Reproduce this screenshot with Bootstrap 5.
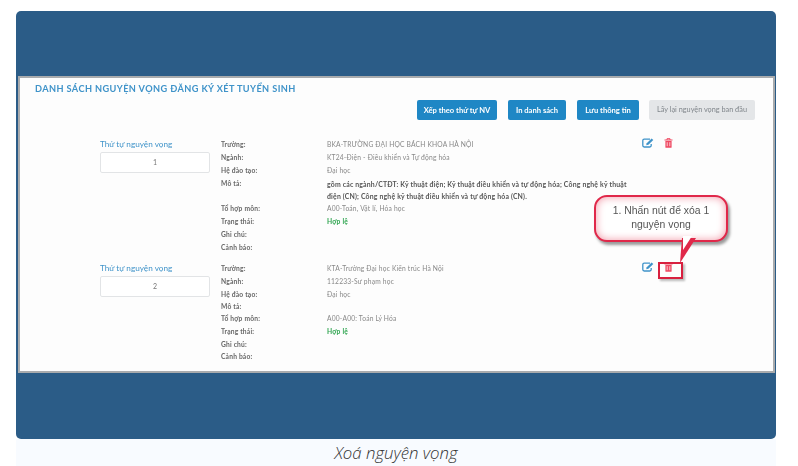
<!DOCTYPE html>
<html lang="vi"><head><meta charset="utf-8"><title>Xoá nguyện vọng</title>
<link rel="stylesheet" href="https://cdn.jsdelivr.net/npm/bootstrap@5.3.0/dist/css/bootstrap.min.css">
<style>
html,body{height:466px;overflow:hidden;background:#fff}
.page-wrap{padding:11px 22px 0 16px;height:466px}
.shot{background:#2b5c87;border-radius:5px;padding:65px 1px 66px 2px;height:428px}
.panel{position:relative;height:297px;background:#fdfdfd;border:2px solid #a9abad;padding:4px 17px 0 15px;font-family:"Lato","Liberation Sans",sans-serif}
.soft{filter:blur(.55px)}
.ttl{font-family:"Lato","Liberation Sans",sans-serif;font-weight:700;font-size:9.2px;line-height:13px;color:#3f93c9;letter-spacing:.4px;margin:0}
.tools{gap:11px;margin:5px 0 0;padding-right:1px}
.act{height:20px;padding:0;border:0;border-radius:2px;font-size:7.6px;line-height:20px;font-weight:700;color:#fff;background:#1f87c5}
.act-a{width:80px}.act-b{width:58px}.act-c{width:62px;margin-right:-1px}
.act-off{width:106px;background:#e4e6e8;color:#80868b;font-weight:400;font-size:7.3px}
.rec{display:flex;padding-left:65px;margin-top:18px}
.rec+.rec{margin-top:8px}
.pick{width:121px;flex:none}
.pick-l{font-size:8.2px;line-height:13px;color:#3f93c9}
.pick-i{width:110px;height:21px;border:1px solid #e2e4e6;background:#fff;border-radius:2px;font-size:7px;line-height:19px;text-align:center;color:#777;margin-top:1px}
.info{width:417px;flex:none}
.ln{display:flex;font-size:6.7px;letter-spacing:.18px;line-height:13px;color:#888;min-height:13px}
.ln>span:first-child{width:106px;flex:none;color:#666;font-weight:700}
.ln-t{min-height:11px;line-height:11px}
.ln-v{width:308px;line-height:12px;padding-top:1px}
.strong{font-weight:700;color:#555;font-size:6.9px}
.ok{color:#2da44e;font-weight:700}
.ico{display:flex;gap:10px;padding-left:4px;height:13px;align-items:flex-start}
.hl{position:absolute;left:638px;top:184px;width:25px;height:17px;border:2px solid #d8203f;box-shadow:2px 2px 2px #bbb}
.call{position:absolute;left:574px;top:117px;width:134px;height:47px;background:#fff;border:2px solid #e0284a;border-radius:13px;box-shadow:inset 0 0 9px #f29aa8,2px 3px 3px #9a9a9a;font-family:"Liberation Sans",sans-serif;font-size:10.4px;line-height:14px;text-align:center;color:#555;padding:7px 10px 0}
.pin{position:absolute;left:660px;top:160px;width:16px;height:25px;background:#e0284a;clip-path:polygon(2px 0,16px 0,0 25px);z-index:3}
.pin-in{position:absolute;left:663px;top:158px;width:9px;height:14px;background:#fff;clip-path:polygon(0 0,9px 0,0 14px);z-index:4}
.cap{background:#f8fbff;height:27px;font-family:"Open Sans",sans-serif;font-style:italic;font-weight:300;font-size:16.8px;line-height:27px;text-align:center;color:#333}
.shot-wrap{width:760px}
</style></head><body>
<div class="page-wrap"><div class="shot-wrap">
<div class="shot"><div class="panel">
<div class="soft">
<h1 class="ttl">DANH SÁCH NGUYỆN VỌNG ĐĂNG KÝ XÉT TUYỂN SINH</h1>
<div class="d-flex justify-content-end tools">
<button class="act act-a">Xếp theo thứ tự NV</button><button class="act act-b">In danh sách</button><button class="act act-c">Lưu thông tin</button><button class="act act-off">Lấy lại nguyện vọng ban đầu</button>
</div>
<div class="rec">
<div class="pick"><div class="pick-l">Thứ tự nguyện vọng</div><div class="pick-i">1</div></div>
<div class="info">
<div class="ln"><span>Trường:</span><span>BKA-TRƯỜNG ĐẠI HỌC BÁCH KHOA HÀ NỘI</span></div>
<div class="ln"><span>Ngành:</span><span>KT24-Điện - Điều khiển và Tự động hóa</span></div>
<div class="ln"><span>Hệ đào tạo:</span><span>Đại học</span></div>
<div class="ln"><span>Mô tả:</span><span class="ln-v strong">gồm các ngành/CTĐT: Kỹ thuật điện; Kỹ thuật điều khiển và tự động hóa; Công nghệ kỹ thuật điện (CN); Công nghệ kỹ thuật điều khiển và tự động hóa (CN).</span></div>
<div class="ln"><span>Tổ hợp môn:</span><span>A00-Toán, Vật lí, Hóa học</span></div>
<div class="ln"><span>Trạng thái:</span><span class="ok">Hợp lệ</span></div>
<div class="ln"><span>Ghi chú:</span><span></span></div>
<div class="ln"><span>Cảnh báo:</span><span></span></div>
</div>
<div class="ico">
<svg width="12" height="10" viewBox="0 0 12 10"><path d="M8 1.2H2.2a1.4 1.4 0 0 0-1.4 1.4v5a1.4 1.4 0 0 0 1.4 1.4h5.6a1.4 1.4 0 0 0 1.4-1.4V6" fill="none" stroke="#3f93c9" stroke-width="1.3"/><path d="M4.2 7.2l.5-2L9.6.4l1.7 1.6-4.9 4.8z" fill="#3f93c9"/></svg>
<svg width="9" height="10" viewBox="0 0 9 10"><path d="M.5 2h8M3 2V.7h3V2" fill="none" stroke="#ef4a63" stroke-width="1"/><path d="M1.4 3h6.2v6.2a.6.6 0 0 1-.6.6H2a.6.6 0 0 1-.6-.6z" fill="#ef4a63"/><path d="M3.2 4.2v4M5.8 4.2v4" stroke="#fff" stroke-width=".7"/></svg>
</div>
</div>
<div class="rec">
<div class="pick"><div class="pick-l">Thứ tự nguyện vọng</div><div class="pick-i">2</div></div>
<div class="info">
<div class="ln"><span>Trường:</span><span>KTA-Trường Đại học Kiến trúc Hà Nội</span></div>
<div class="ln"><span>Ngành:</span><span>112233-Sư phạm học</span></div>
<div class="ln"><span>Hệ đào tạo:</span><span>Đại học</span></div>
<div class="ln ln-t"><span>Mô tả:</span><span></span></div>
<div class="ln"><span>Tổ hợp môn:</span><span>A00-A00: Toán Lý Hóa</span></div>
<div class="ln"><span>Trạng thái:</span><span class="ok">Hợp lệ</span></div>
<div class="ln"><span>Ghi chú:</span><span></span></div>
<div class="ln ln-t"><span>Cảnh báo:</span><span></span></div>
</div>
<div class="ico">
<svg width="12" height="10" viewBox="0 0 12 10"><path d="M8 1.2H2.2a1.4 1.4 0 0 0-1.4 1.4v5a1.4 1.4 0 0 0 1.4 1.4h5.6a1.4 1.4 0 0 0 1.4-1.4V6" fill="none" stroke="#3f93c9" stroke-width="1.3"/><path d="M4.2 7.2l.5-2L9.6.4l1.7 1.6-4.9 4.8z" fill="#3f93c9"/></svg>
<svg width="9" height="10" viewBox="0 0 9 10"><path d="M.5 2h8M3 2V.7h3V2" fill="none" stroke="#ef4a63" stroke-width="1"/><path d="M1.4 3h6.2v6.2a.6.6 0 0 1-.6.6H2a.6.6 0 0 1-.6-.6z" fill="#ef4a63"/><path d="M3.2 4.2v4M5.8 4.2v4" stroke="#fff" stroke-width=".7"/></svg>
</div>
</div>
</div>
<div class="hl"></div>
<div class="call soft">1. Nhấn nút để xóa 1 nguyện vọng</div>
<div class="pin"></div><div class="pin-in"></div>
</div></div>
<div class="cap">Xoá nguyện vọng</div>
</div></div>
</body></html>
